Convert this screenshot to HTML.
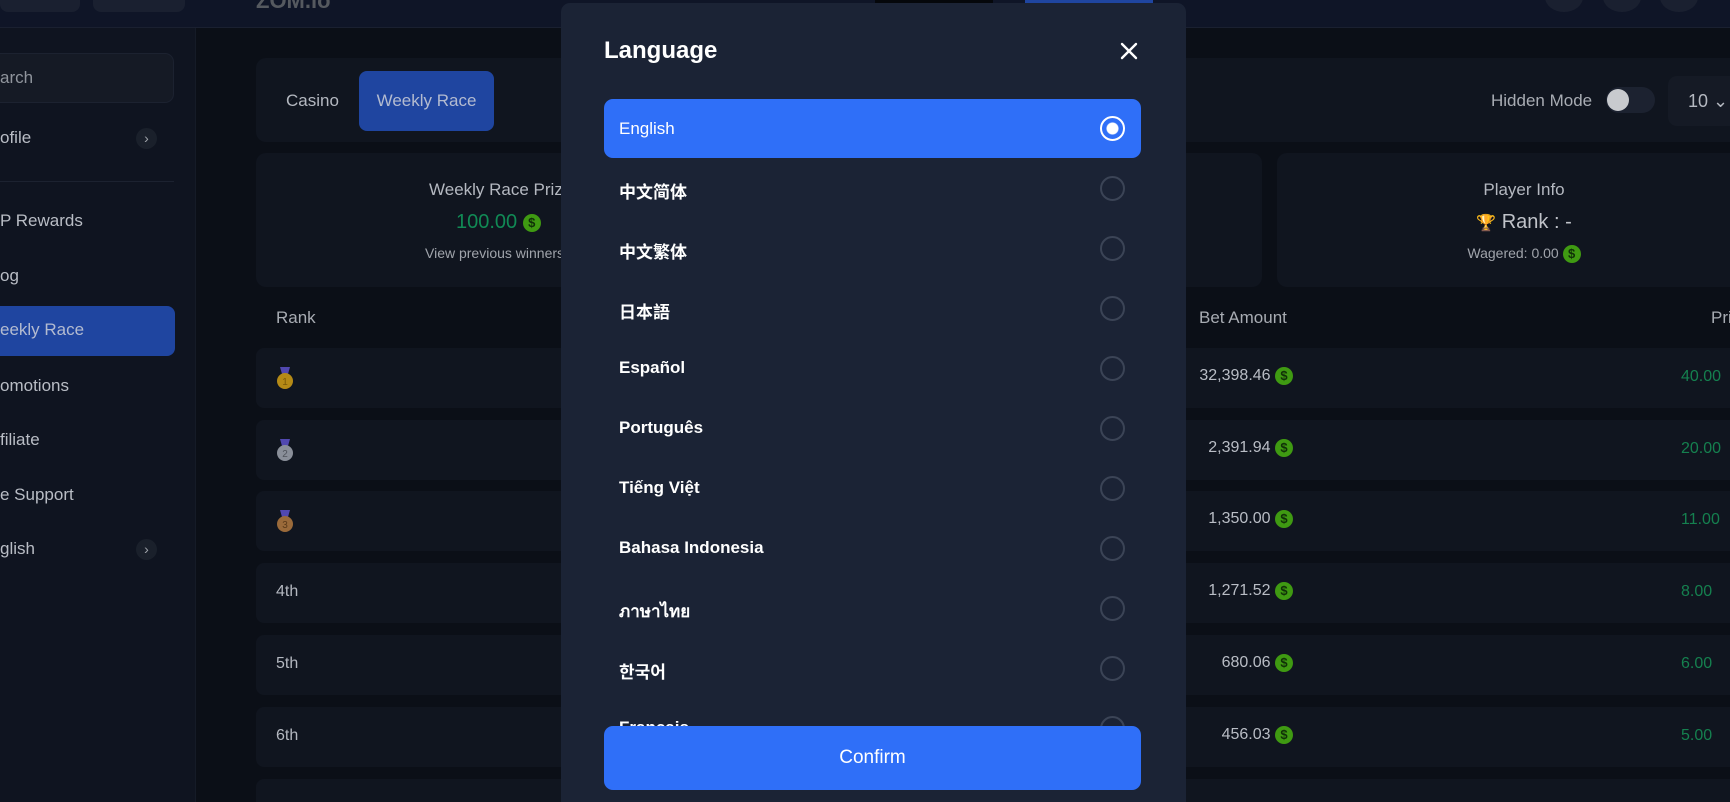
<!DOCTYPE html>
<html style="width:1730px;height:802px;overflow:hidden"><head><meta charset="utf-8"><style>
*{box-sizing:border-box;margin:0;padding:0}
body{width:1730px;height:802px;overflow:hidden;background:#0b0f17;font-family:"Liberation Sans","Noto Sans CJK SC",sans-serif;position:relative;color:#b4b8c0}
.abs{position:absolute}
.hdr{left:0;top:0;width:1730px;height:28px;background:#0f1527;border-bottom:1px solid #1a2030}
.side{left:0;top:28px;width:196px;height:774px;background:#0f1420;border-right:1px solid #151b27}
.si{position:absolute;left:0;font-size:17px;color:#b9bdc5}
.panel{background:#10151f;border-radius:10px}
.coin{display:inline-block;width:18px;height:18px;border-radius:50%;background:#3f9a12;color:#103008;font-size:13px;font-weight:bold;text-align:center;line-height:18px;vertical-align:middle}
.row{position:absolute;left:256px;width:1500px;height:60px;background:#10151f;border-radius:8px}
.row .r{position:absolute;left:20px;top:20px;font-size:16px;color:#b4b8c0}
.row .b{position:absolute;right:463px;top:19px;font-size:16px;color:#b9bdc5}
.row .p{position:absolute;left:1425px;top:20px;font-size:16px;color:#15804f}
.medal{position:absolute;left:20px;top:18px;width:18px;height:24px}
.modal{left:561px;top:3px;width:625px;height:799px;background:#1b2335;border-radius:9px 9px 0 0}
.opt{position:absolute;left:43px;width:537px;height:59px;border-radius:9px}
.opt span{position:absolute;left:15px;top:19px;font-size:17px;color:#fff;font-weight:bold}
.opt i{position:absolute;left:496px;top:17px;width:25px;height:25px;border-radius:50%;border:2px solid #3b4456}
</style></head><body>
<div class="abs hdr"></div>
<div class="abs" style="left:0;top:-10px;width:80px;height:22px;background:#1a2030;border-radius:8px"></div>
<div class="abs" style="left:93px;top:-10px;width:92px;height:22px;background:#1a2030;border-radius:8px"></div>
<div class="abs" style="left:256px;top:-12px;font-size:22px;font-weight:bold;color:#55595f">ZOM.io</div>
<div class="abs" style="left:875px;top:-10px;width:118px;height:13px;background:#05070b"></div>
<div class="abs" style="left:1025px;top:-10px;width:128px;height:13px;background:#1f45a0"></div>
<div class="abs" style="left:1545px;top:-18px;width:38px;height:30px;border-radius:50%;background:#1a2030"></div>
<div class="abs" style="left:1603px;top:-18px;width:38px;height:30px;border-radius:50%;background:#1a2030"></div>
<div class="abs" style="left:1660px;top:-18px;width:38px;height:30px;border-radius:50%;background:#1a2030"></div>

<div class="abs side"></div>
<div class="abs" style="left:-10px;top:53px;width:184px;height:50px;background:#151a25;border:1px solid #1c2230;border-radius:9px"></div>
<div class="si" style="top:68px;color:#8f949c">arch</div>
<div class="si" style="top:128px">ofile</div>
<div class="abs" style="left:136px;top:128px;width:21px;height:21px;border-radius:50%;background:#1a202b;color:#a0a4ab;font-size:14px;text-align:center;line-height:20px">&#8250;</div>
<div class="abs" style="left:0;top:181px;width:174px;height:1px;background:#1c2230"></div>
<div class="si" style="top:211px">P Rewards</div>
<div class="si" style="top:266px">og</div>
<div class="abs" style="left:0;top:306px;width:175px;height:50px;background:#1f45a0;border-radius:0 8px 8px 0"></div>
<div class="si" style="top:320px;color:#b3bbd0">eekly Race</div>
<div class="si" style="top:376px">omotions</div>
<div class="si" style="top:430px">filiate</div>
<div class="si" style="top:485px">e Support</div>
<div class="si" style="top:539px">glish</div>
<div class="abs" style="left:136px;top:539px;width:21px;height:21px;border-radius:50%;background:#1a202b;color:#a0a4ab;font-size:14px;text-align:center;line-height:20px">&#8250;</div>

<div class="abs panel" style="left:256px;top:58px;width:1500px;height:84px"></div>
<div class="abs" style="left:286px;top:91px;font-size:17px;color:#b4b8c0">Casino</div>
<div class="abs" style="left:359px;top:71px;width:135px;height:60px;background:#1f45a0;border-radius:8px;color:#b3bbd0;font-size:17px;text-align:center;line-height:60px">Weekly Race</div>
<div class="abs" style="left:1491px;top:91px;font-size:17px;color:#a8acb3">Hidden Mode</div>
<div class="abs" style="left:1606px;top:87px;width:49px;height:26px;border-radius:13px;background:#1c2230"></div>
<div class="abs" style="left:1607px;top:89px;width:22px;height:22px;border-radius:50%;background:#c8cace"></div>
<div class="abs" style="left:1668px;top:76px;width:90px;height:50px;border-radius:9px;background:#151a25"></div>
<div class="abs" style="left:1688px;top:91px;font-size:18px;color:#b4b8c0">10 &#8964;</div>

<div class="abs panel" style="left:256px;top:153px;width:494px;height:134px"></div>
<div class="abs" style="left:429px;top:180px;font-size:17px;color:#b4b8c0">Weekly Race Prize Pool</div>
<div class="abs" style="left:456px;top:211px;font-size:20px;color:#118a55">100.00 <span class="coin">$</span></div>
<div class="abs" style="left:425px;top:245px;font-size:14px;color:#a0a4ab">View previous winners</div>
<div class="abs panel" style="left:768px;top:153px;width:494px;height:134px"></div>
<div class="abs panel" style="left:1277px;top:153px;width:494px;height:134px"></div>
<div class="abs" style="left:1277px;top:180px;width:494px;text-align:center;font-size:17px;color:#b4b8c0">Player Info</div>
<div class="abs" style="left:1277px;top:211px;width:494px;text-align:center;font-size:20px;color:#c0c3c9"><span style="color:#c08a20;font-size:16px">&#127942;</span> Rank : -</div>
<div class="abs" style="left:1277px;top:245px;width:494px;text-align:center;font-size:14px;color:#a0a4ab">Wagered: 0.00 <span class="coin">$</span></div>

<div class="abs" style="left:276px;top:308px;font-size:17px;color:#a8acb3">Rank</div>
<div class="abs" style="left:1199px;top:308px;font-size:17px;color:#a8acb3">Bet Amount</div>
<div class="abs" style="left:1711px;top:308px;font-size:17px;color:#a8acb3">Prize</div>

<div class="row" style="top:348px"><svg class="medal" viewBox="0 0 18 24"><path d="M4 1h10l-2 7H6z" fill="#5148b0"/><circle cx="9" cy="15" r="8" fill="#b58a16"/><text x="9" y="19" font-size="10" text-anchor="middle" fill="#7a5a08" font-family="Liberation Sans">1</text></svg><div class="b">32,398.46 <span class="coin">$</span></div><div class="p">40.00</div></div>
<div class="row" style="top:420px"><svg class="medal" viewBox="0 0 18 24"><path d="M4 1h10l-2 7H6z" fill="#5148b0"/><circle cx="9" cy="15" r="8" fill="#8a8f99"/><text x="9" y="19" font-size="10" text-anchor="middle" fill="#50545c" font-family="Liberation Sans">2</text></svg><div class="b">2,391.94 <span class="coin">$</span></div><div class="p">20.00</div></div>
<div class="row" style="top:491px"><svg class="medal" viewBox="0 0 18 24"><path d="M4 1h10l-2 7H6z" fill="#5148b0"/><circle cx="9" cy="15" r="8" fill="#9a6a3a"/><text x="9" y="19" font-size="10" text-anchor="middle" fill="#5a3a1a" font-family="Liberation Sans">3</text></svg><div class="b">1,350.00 <span class="coin">$</span></div><div class="p">11.00</div></div>
<div class="row" style="top:563px"><div class="r">4th</div><div class="b">1,271.52 <span class="coin">$</span></div><div class="p">8.00</div></div>
<div class="row" style="top:635px"><div class="r">5th</div><div class="b">680.06 <span class="coin">$</span></div><div class="p">6.00</div></div>
<div class="row" style="top:707px"><div class="r">6th</div><div class="b">456.03 <span class="coin">$</span></div><div class="p">5.00</div></div>
<div class="row" style="top:779px;height:23px;border-radius:8px 8px 0 0"></div>

<div class="abs modal" style="overflow:hidden">
<div class="abs" style="left:43px;top:34px;font-size:24px;color:#fff;font-weight:bold">Language</div>
<svg class="abs" style="left:559px;top:39px" width="18" height="18" viewBox="0 0 18 18"><path d="M2 2L16 16M16 2L2 16" stroke="#fff" stroke-width="2.4" stroke-linecap="round"/></svg>
<div class="abs" style="left:0;top:90px;width:625px;height:633px;overflow:hidden">
<div class="opt" style="top:6px;background:#2f6ff8"><span style="font-weight:normal;top:20px">English</span><i style="border-color:#fff;background:radial-gradient(circle,#fff 0 5.5px,transparent 6.5px)"></i></div>
<div class="opt" style="top:66px"><span>中文简体</span><i></i></div>
<div class="opt" style="top:126px"><span>中文繁体</span><i></i></div>
<div class="opt" style="top:186px"><span>日本語</span><i></i></div>
<div class="opt" style="top:246px"><span>Español</span><i></i></div>
<div class="opt" style="top:306px"><span>Português</span><i></i></div>
<div class="opt" style="top:366px"><span>Tiếng Việt</span><i></i></div>
<div class="opt" style="top:426px"><span>Bahasa Indonesia</span><i></i></div>
<div class="opt" style="top:486px"><span>ภาษาไทย</span><i></i></div>
<div class="opt" style="top:546px"><span>한국어</span><i></i></div>
<div class="opt" style="top:606px"><span>Français</span><i></i></div>
</div>
<div class="abs" style="left:43px;top:723px;width:537px;height:64px;background:#2f6ff8;border-radius:9px;color:#fff;font-size:19px;text-align:center;line-height:64px">Confirm</div>
</div>
</body></html>
